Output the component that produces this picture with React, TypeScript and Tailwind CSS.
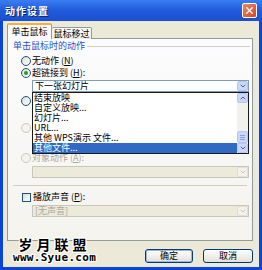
import React from "react";
import { ChevronDown, ChevronUp, X } from "lucide-react";

// Windows XP style "动作设置" dialog with the hyperlink list opened

function Radio({ checked, disabled }: { checked?: boolean; disabled?: boolean }) {
  return (
    <span
      className={`flex h-[10px] w-[10px] shrink-0 items-center justify-center rounded-full border ${
        disabled ? "border-[#cac8bb] bg-[#f4f3ee]" : "border-[#1c5180] bg-gradient-to-br from-[#dcdcd5] to-white"
      }`}
    >
      {checked && <span className="h-[4px] w-[4px] rounded-full bg-[#21a121]" />}
    </span>
  );
}

function ArrowBtn({ up, disabled }: { up?: boolean; disabled?: boolean }) {
  return (
    <span
      className={`flex h-full w-[11px] items-center justify-center rounded-[2px] border ${
        disabled ? "border-[#e0dfd6] bg-[#f2f1ea] text-[#c9c7ba]" : "border-[#b6c8f2] bg-[#c8d7fb] text-[#4d6185]"
      }`}
    >
      {up ? <ChevronUp size={8} strokeWidth={3} /> : <ChevronDown size={8} strokeWidth={3} />}
    </span>
  );
}

function Select({ text, disabled }: { text?: string; disabled?: boolean }) {
  return (
    <div
      className={`ml-[24px] flex h-[12px] w-[217px] items-stretch border ${
        disabled ? "border-[#c9c7ba] bg-[#ebeadb]" : "border-[#7f9db9] bg-white"
      }`}
    >
      <span className={`flex flex-1 items-center pl-[2px] leading-[10px] ${disabled ? "text-[#aca899]" : "text-black"}`}>
        {text}
      </span>
      <ArrowBtn disabled={disabled} />
    </div>
  );
}

const listItems = ["结束放映", "自定义放映...", "幻灯片...", "URL...", "其他 WPS演示 文件...", "其他文件..."];

const outline = "[text-shadow:1px_0_0_#fff,-1px_0_0_#fff,0_1px_0_#fff,0_-1px_0_#fff,1px_1px_0_#fff,-1px_-1px_0_#fff,1px_-1px_0_#fff,-1px_1px_0_#fff]";

export default function App() {
  return (
    <div className="relative flex h-[270px] w-[262px] flex-col overflow-hidden bg-[#0b45d8] font-['Noto_Sans_CJK_SC','Liberation_Sans',sans-serif] text-[9px]">
      {/* Title bar */}
      <div className="flex h-[21px] shrink-0 items-center justify-between bg-gradient-to-b from-[#3c7df2] via-[#1f5bdc] to-[#1a50d0] pl-[5px] pr-[5px]">
        <span className="text-[10px] font-bold leading-[10px] tracking-[1px] text-white [text-shadow:1px_1px_0_#0a1e6e]">动作设置</span>
        <span className="flex h-[15px] w-[15px] items-center justify-center rounded-[2px] border border-white bg-gradient-to-br from-[#e9876a] to-[#d64419] text-white">
          <X size={11} strokeWidth={3} />
        </span>
      </div>

      {/* Body */}
      <div className="mx-[3px] flex flex-1 flex-col bg-[#ece9d8]">
        {/* Tabs */}
        <div className="z-10 -mb-px mt-[2px] ml-[4px] flex h-[16px] items-end">
          <div className="flex h-[16px] w-[45px] items-center justify-center rounded-t-[2px] border-x border-t-2 border-x-[#919b9c] border-t-[#f7b13c] bg-[#fcfcfe] pb-px">
            单击鼠标
          </div>
          <div className="flex h-[12px] w-[40px] items-center justify-center rounded-t-[2px] border-r border-t border-[#919b9c] bg-gradient-to-b from-white to-[#ecebe5]">
            鼠标移过
          </div>
        </div>

        {/* Panel */}
        <div className="ml-[4px] flex h-[203px] w-[246px] flex-col border border-[#919b9c] bg-gradient-to-b from-[#fcfcfe] to-[#f4f3ee] pt-[2px]">
          <div className="flex h-[10px] items-center gap-[2px] pl-[5px] pr-[2px]">
            <span className="leading-[10px] text-[#1e50c8]">单击鼠标时的动作</span>
            <span className="h-px flex-1 bg-[#d0d0bf]" />
          </div>

          <div className="mt-[5px] flex h-[10px] items-center gap-[1px] pl-[13px]">
            <Radio />
            <span>
              无动作 (<span className="underline">N</span>)
            </span>
          </div>

          <div className="mt-[2px] flex h-[10px] items-center gap-[1px] pl-[13px]">
            <Radio checked />
            <span>
              超链接到 (<span className="underline">H</span>):
            </span>
          </div>

          <div className="relative mt-[2px]">
            <Select text="下一张幻灯片" />
            {/* Opened list */}
            <div className="absolute left-[24px] top-full z-20 flex h-[62px] w-[217px] border border-[#1a1a1a] bg-white">
              <div className="flex flex-1 flex-col">
                {listItems.map((item, i) => (
                  <div
                    key={item}
                    className={`flex h-[10px] items-center pl-[1px] leading-[10px] ${
                      i === listItems.length - 1 ? "bg-[#316ac5] text-white" : "text-black"
                    }`}
                  >
                    {item}
                  </div>
                ))}
              </div>
              <div className="flex w-[11px] flex-col bg-[#f3f1ec]">
                <div className="h-[10px]">
                  <ArrowBtn up />
                </div>
                <div className="flex flex-1 flex-col justify-end">
                  <div className="flex h-[12px] flex-col items-center justify-center gap-px rounded-[2px] border border-[#b6c8f2] bg-[#c8d7fb]">
                    <span className="h-px w-[5px] bg-[#8aa0d6]" />
                    <span className="h-px w-[5px] bg-[#8aa0d6]" />
                    <span className="h-px w-[5px] bg-[#8aa0d6]" />
                  </div>
                </div>
                <div className="h-[10px]">
                  <ArrowBtn />
                </div>
              </div>
            </div>
          </div>

          {/* rows hidden behind the opened list */}
          <div className="mt-[4px] flex h-[10px] items-center pl-[13px]">
            <Radio />
          </div>
          <div className="ml-[24px] mt-[3px] h-[12px] w-[160px] border border-[#c9c7ba] bg-[#ebeadb]" />

          <div className="mt-[2px] flex h-[10px] items-center pl-[13px]">
            <Radio disabled />
          </div>
          <div className="mt-[3px]">
            <Select disabled />
          </div>

          <div className="mt-[5px] flex h-[10px] items-center gap-[1px] pl-[13px] text-[#aca899]">
            <Radio disabled />
            <span>
              对象动作 (<span className="underline">A</span>):
            </span>
          </div>
          <div className="mt-[3px]">
            <Select disabled />
          </div>

          <div className="mx-[5px] mt-[7px] h-px bg-[#d0d0bf]" />

          <div className="mt-[6px] flex h-[10px] items-center gap-[2px] pl-[14px]">
            <span className="h-[9px] w-[9px] border border-[#1c5180] bg-gradient-to-br from-[#dcdcd5] to-white" />
            <span>
              播放声音 (<span className="underline">P</span>):
            </span>
          </div>
          <div className="mt-[3px]">
            <Select text="[无声音]" disabled />
          </div>
        </div>

        {/* Buttons */}
        <div className="flex justify-end gap-[10px] pr-[6px] pt-[8px]">
          <button className="flex h-[14px] w-[48px] items-center justify-center rounded-[3px] border border-[#003c74] bg-gradient-to-b from-white to-[#e3e1d6] leading-[10px] shadow-[inset_0_0_0_1px_#9db5ec]">
            确定
          </button>
          <button className="flex h-[14px] w-[50px] items-center justify-center rounded-[3px] border border-[#003c74] bg-gradient-to-b from-white to-[#e3e1d6] leading-[10px]">
            取消
          </button>
        </div>
      </div>
      <div className="h-[3px] shrink-0" />

      {/* Watermark */}
      <div className="absolute left-[13px] top-[236px] z-30 flex flex-col items-center">
        <span className={`text-[14px] font-bold leading-[16px] tracking-[4px] text-black ${outline}`}>岁月联盟</span>
        <span className={`font-['DejaVu_Sans_Mono',monospace] text-[11px] font-bold leading-[11px] tracking-[0.3px] text-black ${outline}`}>
          www.Syue.com
        </span>
      </div>
    </div>
  );
}
